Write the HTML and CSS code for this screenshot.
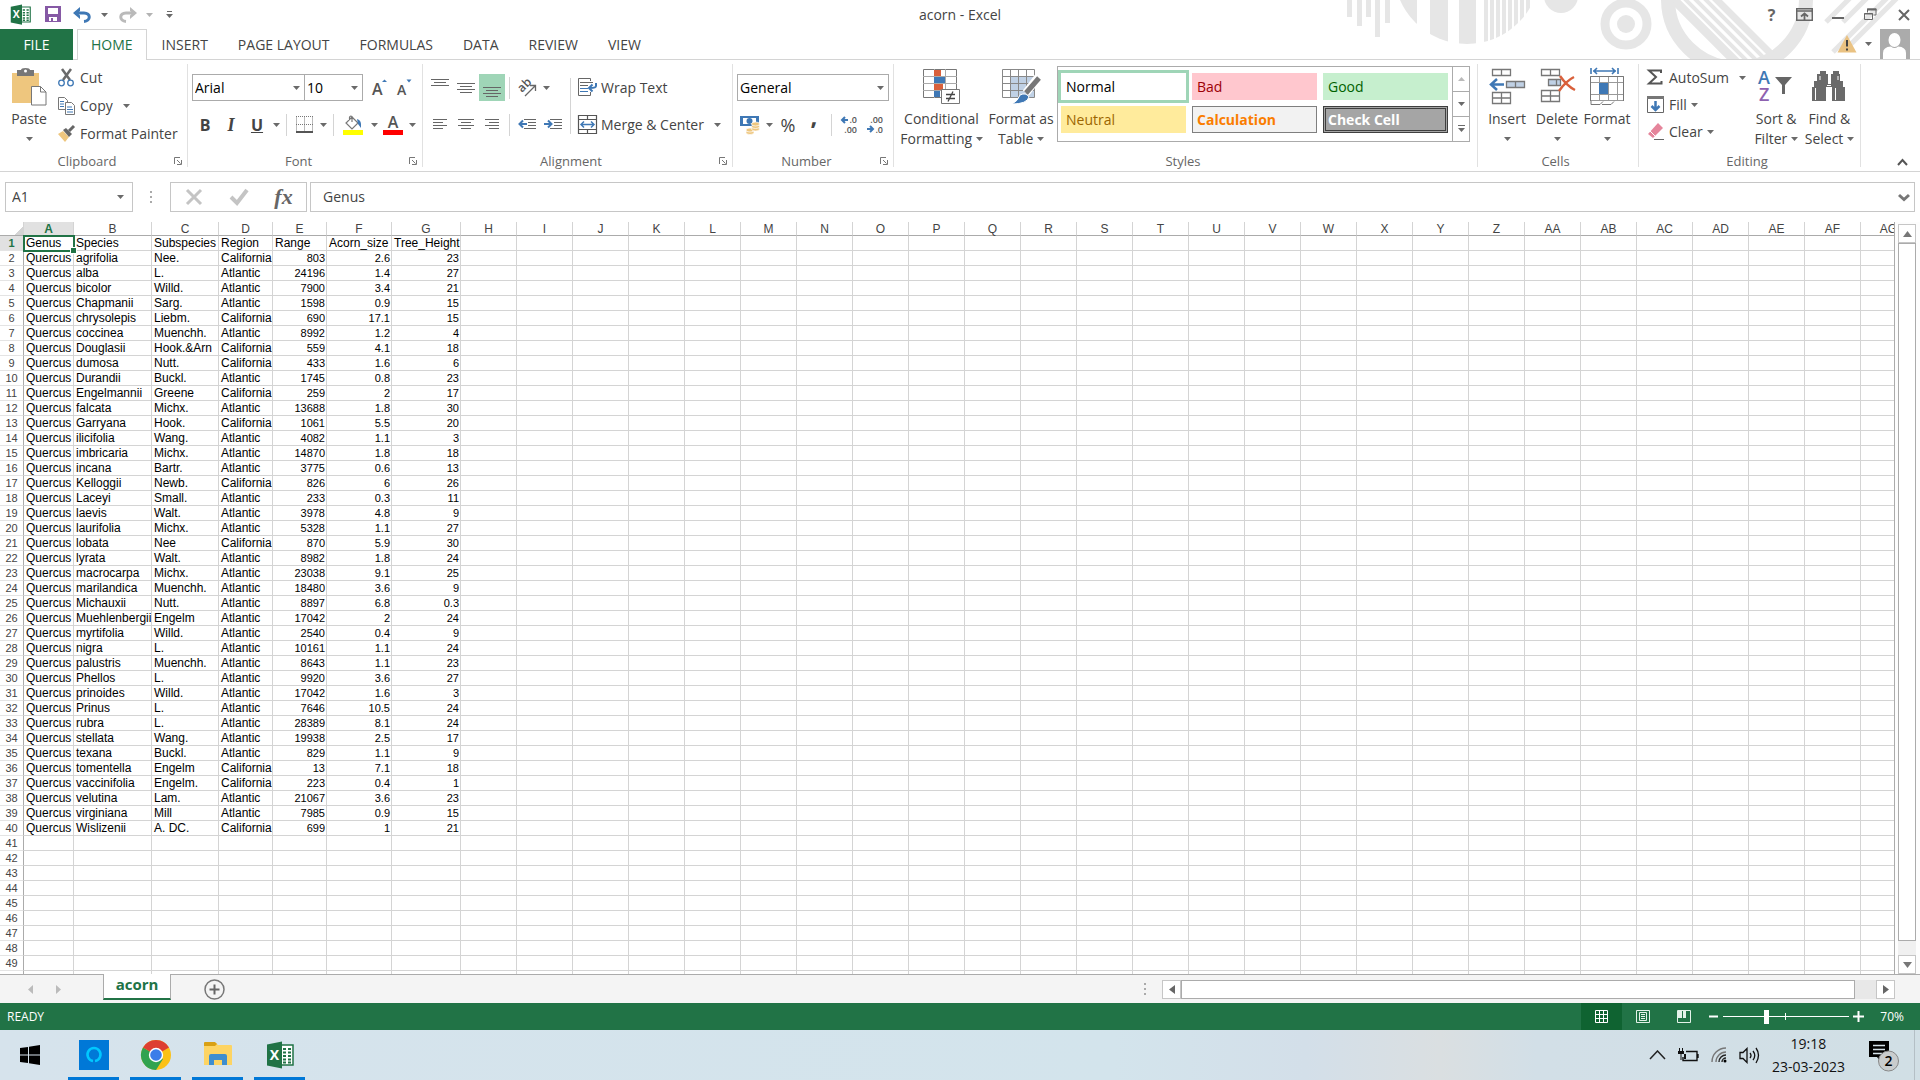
FILE: index.html
```html
<!DOCTYPE html>
<html lang="en">

<head>
    <meta charset="utf-8">
    <title>acorn - Excel</title>
    <link rel="stylesheet" href="styles.css">
</head>

<body>
    <svg class="defs">
        <symbol id="caret" viewBox="0 0 7 4"><path d="M0 0h7L3.500 4z" fill="#6a6a6a"/></symbol>
        <symbol id="launcher" viewBox="0 0 8 8"><path d="M.5 7V.5H6M3 3l3.500 3.500M7.500 3v4.500H3" fill="none" stroke="#777"/></symbol>
        <symbol id="excel" viewBox="0 0 28 28">
            <path d="M14 4h13v20H14z" fill="#fff" stroke="#217346" stroke-width="1.500"/>
            <path d="M17 8h3M22 8h3M17 11.500h3M22 11.500h3M17 15h3M22 15h3M17 18.500h3M22 18.500h3M17 21.500h3M22 21.500h3" stroke="#217346" stroke-width="2"/>
            <path d="M1 3.500L16 .5v27L1 24.500z" fill="#217346"/>
            <text x="8.500" y="19" text-anchor="middle" class="excel-x">X</text>
        </symbol>
    </svg>

    <header class="top">
        <svg class="art" width="580" height="60" viewBox="1340 0 580 60">
            <clipPath id="c1"><circle cx="1467" cy="-29" r="73"/></clipPath>
            <clipPath id="c2"><circle cx="1737" cy="-1" r="64"/></clipPath>
            <g fill="#e6e6e6">
                <path d="M1347 0h5v17h-5zM1357 0h5v26h-5zM1366 0h5v17h-5zM1375 0h5v37h-5zM1385 0h5v23h-5z"/>
                <path clip-path="url(#c1)" d="M1398 0h19v50h-19zM1430 0h18v50h-18zM1459 0h17v50h-17zM1484 0h4v50h-4zM1490 0h4v50h-4zM1496 0h4v50h-4zM1502 0h4v50h-4zM1508 0h4v50h-4zM1514 0h4v50h-4zM1520 0h4v50h-4zM1526 0h4v50h-4z"/>
                <circle cx="1561" cy="-4" r="17"/>
                <circle cx="1626" cy="24" r="9"/>
            </g>
            <g fill="none" stroke="#e6e6e6">
                <circle cx="1626" cy="24" r="21" stroke-width="9"/>
                <circle cx="1737" cy="-1" r="69" stroke-width="14"/>
                <g clip-path="url(#c2)" stroke-width="4">
                    <path stroke-width="9" d="M1668-6l70 70"/>
                    <path d="M1682-4l70 70M1692-4l70 70M1702-4l70 70"/>
                    <path stroke-width="7" d="M1713-4l70 70"/>
                </g>
                <path stroke-width="5" d="M1826 22l30-30M1843 22l30-30M1833 52l60-60M1851 44l52-52"/>
            </g>
        </svg>

        <div class="titlebar">
            <div class="qat">
                <svg class="app-icon" width="21" height="21"><use href="#excel"/></svg>
                <button class="qat-btn" aria-label="Save"><svg width="17" height="17" viewBox="0 0 17 17"><path d="M0 0h16v16H0z" fill="#8659a5"/><path d="M3 2h10v6H3zM4 11h8v4H4z" fill="#fff"/><path d="M6 12h2v4H6z" fill="#8659a5"/></svg></button>
                <button class="qat-btn" aria-label="Undo"><svg width="19" height="16" viewBox="0 0 19 16"><path d="M2 6h9c7 0 7 8 0 8.500" fill="none" stroke="#3f78b5" stroke-width="3"/><path d="M7 0L0 6l7 6V8.500L4.500 6 7 4z" fill="#3f78b5"/></svg></button>
                <button class="qat-caret" aria-label="Undo list"><svg width="7" height="4"><use href="#caret"/></svg></button>
                <button class="qat-btn faded" aria-label="Redo"><svg width="19" height="16" viewBox="0 0 19 16"><path d="M17 6H8c-7 0-7 8 0 8.500" fill="none" stroke="#777" stroke-width="3"/><path d="M12 0l7 6-7 6V8.500L14.500 6 12 4z" fill="#777"/></svg></button>
                <button class="qat-caret faded" aria-label="Redo list"><svg width="7" height="4"><use href="#caret"/></svg></button>
                <button class="qat-caret last" aria-label="Customize"><svg width="7" height="8" viewBox="0 0 7 8"><path d="M1 .5h5" stroke="#6a6a6a"/><path d="M0 3h7L3.500 7z" fill="#6a6a6a"/></svg></button>
            </div>
            <h1 class="title">acorn - Excel</h1>
            <div class="winbtns">
                <button class="winbtn help" aria-label="Help">?</button>
                <button class="winbtn" aria-label="Ribbon display options"><svg width="17" height="13" viewBox="0 0 17 13"><path d="M.75.75h15.500v11.500H.75zM1 3h15" fill="none" stroke="#666" stroke-width="1.500"/><path d="M8.500 12V6M5 8.500l3.500-3 3.500 3" fill="none" stroke="#666" stroke-width="1.800"/></svg></button>
                <button class="winbtn" aria-label="Minimize"><svg width="12" height="13"><path d="M0 9h12v2H0z" fill="#666"/></svg></button>
                <button class="winbtn" aria-label="Restore"><svg width="13" height="13" viewBox="0 0 13 13" fill="none" stroke="#666"><path d="M3.500 4.500V1h8.500v6H9.500"/><path d="M3 1.500h9.500" stroke-width="2"/><path d="M.5 5.500h8v6h-8zM0 6h9"/></svg></button>
                <button class="winbtn" aria-label="Close"><svg width="12" height="12" viewBox="0 0 12 12"><path d="M1 1l10 10M11 1L1 11" stroke="#666" stroke-width="2"/></svg></button>
            </div>
        </div>

        <nav class="tabs">
            <button class="file-tab">FILE</button>
            <button class="tab active">HOME</button>
            <button class="tab">INSERT</button>
            <button class="tab">PAGE LAYOUT</button>
            <button class="tab">FORMULAS</button>
            <button class="tab">DATA</button>
            <button class="tab">REVIEW</button>
            <button class="tab">VIEW</button>
            <div class="account">
                <svg width="20" height="18" viewBox="0 0 20 18"><path d="M10 0l9.500 17.500H.5z" fill="#eac282"/><path d="M10 5v6.500M10 13.500v2" stroke="#444" stroke-width="2"/></svg>
                <svg width="7" height="4"><use href="#caret"/></svg>
                <svg width="30" height="30" viewBox="0 0 30 30"><path d="M0 0h30v30H0z" fill="#ababab"/><ellipse cx="14.500" cy="11" rx="6" ry="7" fill="#fff"/><path d="M3 30V24q0-6 8-6.500 3.500 3 7 0 8 .5 8 6.500v6z" fill="#fff"/></svg>
            </div>
        </nav>
    </header>

    <section class="ribbon">
        <div class="group g-clip">
            <div class="body">
                <button class="big paste">
                    <span class="pic"><svg width="35" height="38" viewBox="0 0 35 38"><path d="M0 5h27v30H0z" fill="#eec67e"/><path d="M5 2h4q0-2 4.500-2T18 2h4v6H5z" fill="#777"/><circle cx="13.500" cy="3" r="1.500" fill="#fff"/><path d="M19.500 18.500h9l5.500 5.500v13H19.500zM28.500 18.500V24H34" fill="#fff" stroke="#777"/></svg></span>
                    <span>Paste</span>
                    <span><svg width="7" height="4"><use href="#caret"/></svg></span>
                </button>
                <div class="list clip-list">
                    <button class="small"><svg class="ic" width="17" height="18" viewBox="0 0 17 18"><path d="M4 0l8 11M13 0L5 11" stroke="#6a6a6a" stroke-width="2.500"/><circle cx="3.500" cy="14" r="2.800" fill="none" stroke="#3f78b5" stroke-width="1.300"/><circle cx="12.500" cy="14" r="2.800" fill="none" stroke="#3f78b5" stroke-width="1.300"/></svg>Cut</button>
                    <button class="small"><svg class="ic" width="17" height="18" viewBox="0 0 17 18"><path d="M.5.5h6l3 3v9h-9z" fill="#fff" stroke="#777"/><path d="M2 4.500h4M2 7h4M2 9.500h4" stroke="#3f78b5"/><path d="M7.500 5.500h6l3 3v9h-9z" fill="#fff" stroke="#777"/><path d="M9 10h5M9 12.500h6M9 15h6" stroke="#3f78b5"/></svg>Copy<svg class="gap" width="7" height="4"><use href="#caret"/></svg></button>
                    <button class="small"><svg class="ic" width="17" height="16" viewBox="0 0 17 16"><path d="M0 8l5-3 6 6-4 5z" fill="#eec67e"/><path d="M5 4l3-2 6 6-3 3z" fill="#666"/><path d="M11 5l5-5" stroke="#666" stroke-width="3"/></svg>Format Painter</button>
                </div>
            </div>
            <div class="foot"><span>Clipboard</span><svg width="8" height="8"><use href="#launcher"/></svg></div>
        </div>

        <div class="group g-font">
            <div class="body rows">
                <div class="row">
                    <label class="combo font-name"><select aria-label="Font"><option>Arial</option></select><svg width="7" height="4"><use href="#caret"/></svg></label>
                    <label class="combo font-size"><select aria-label="Font size"><option>10</option></select><svg width="7" height="4"><use href="#caret"/></svg></label>
                    <button class="tool" aria-label="Increase font size"><svg width="16" height="18" viewBox="0 0 16 18"><text x="0" y="16" class="glyph-a">A</text><path d="M10 3h5L12.500.5z" fill="#3f78b5"/></svg></button>
                    <button class="tool" aria-label="Decrease font size"><svg width="16" height="18" viewBox="0 0 16 18"><text x="0" y="16" class="glyph-a small-a">A</text><path d="M9.500.5h5l-2.500 3z" fill="#3f78b5"/></svg></button>
                </div>
                <div class="row">
                    <button class="tool letter bold">B</button>
                    <button class="tool letter italic">I</button>
                    <button class="tool letter under">U</button>
                    <button class="drop" aria-label="Underline styles"><svg width="7" height="4"><use href="#caret"/></svg></button>
                    <i class="sep"></i>
                    <button class="tool" aria-label="Borders"><svg width="17" height="17" viewBox="0 0 17 17"><path d="M.5.5v15M8.500.5v15M16.500.5v15M0 .5h17M0 8.500h17" stroke="#777" stroke-dasharray="1 1"/><path d="M0 16h17" stroke="#555" stroke-width="2"/></svg></button>
                    <button class="drop" aria-label="Border styles"><svg width="7" height="4"><use href="#caret"/></svg></button>
                    <i class="sep"></i>
                    <button class="tool wide" aria-label="Fill color"><svg width="20" height="20" viewBox="0 0 20 20"><path d="M9 2l6 6-6 6-6-6zM9 7V1.500q-2-1-2.500 1V5" fill="#fff" stroke="#777" stroke-width="1.200"/><path d="M14 4q5 1 4 9l-3-4z" fill="#3f78b5"/><path d="M0 15h20v5H0z" fill="#ff0"/></svg></button>
                    <button class="drop" aria-label="Fill colors"><svg width="7" height="4"><use href="#caret"/></svg></button>
                    <button class="tool" aria-label="Font color"><svg width="20" height="20" viewBox="0 0 20 20"><text x="10" y="13" text-anchor="middle" class="glyph-a">A</text><path d="M0 15h20v5H0z" fill="#f00"/></svg></button>
                    <button class="drop" aria-label="Font colors"><svg width="7" height="4"><use href="#caret"/></svg></button>
                </div>
            </div>
            <div class="foot"><span>Font</span><svg width="8" height="8"><use href="#launcher"/></svg></div>
        </div>

        <div class="group g-align">
            <div class="body">
                <div class="rows">
                    <div class="row">
                        <button class="tool" aria-label="Top align"><svg width="18" height="18"><path d="M0 .5h18M3 3.500h12M0 6.500h18" stroke="#666"/></svg></button>
                        <button class="tool" aria-label="Middle align"><svg width="18" height="18"><path d="M0 4.500h18M3 7.500h12M0 10.500h18M3 13.500h12" stroke="#666"/></svg></button>
                        <button class="tool on" aria-label="Bottom align"><svg width="18" height="18"><path d="M0 8.500h18M3 11.500h12M0 14.500h18M3 17.500h12" stroke="#666"/></svg></button>
                        <i class="sep"></i>
                        <button class="tool" aria-label="Orientation"><svg width="20" height="18" viewBox="0 0 20 18"><text x="0" y="0" transform="translate(5 14) rotate(-45)" class="ab">ab</text><path d="M8 17L18 7M13 6.500h5.500V12" fill="none" stroke="#666" stroke-width="1.300"/></svg></button>
                        <button class="drop" aria-label="Orientation list"><svg width="7" height="4"><use href="#caret"/></svg></button>
                    </div>
                    <div class="row">
                        <button class="tool" aria-label="Align left"><svg width="14" height="13"><path d="M0 1.500h14M0 4.500h10M0 7.500h14M0 10.500h10" stroke="#666"/></svg></button>
                        <button class="tool" aria-label="Center"><svg width="16" height="13"><path d="M0 1.500h16M3 4.500h10M0 7.500h16M3 10.500h10" stroke="#666"/></svg></button>
                        <button class="tool" aria-label="Align right"><svg width="14" height="13"><path d="M0 1.500h14M4 4.500h10M0 7.500h14M4 10.500h10" stroke="#666"/></svg></button>
                        <i class="sep"></i>
                        <button class="tool" aria-label="Decrease indent"><svg width="18" height="13"><path d="M6 1.500h12M10 4.500h8M10 7.500h8M6 10.500h12" stroke="#666"/><path d="M9 6H2M5 2.500L1.500 6 5 9.500" fill="none" stroke="#3f78b5" stroke-width="2"/></svg></button>
                        <button class="tool" aria-label="Increase indent"><svg width="18" height="13"><path d="M6 1.500h12M10 4.500h8M10 7.500h8M6 10.500h12" stroke="#666"/><path d="M0 6h7M4 2.500L7.500 6 4 9.500" fill="none" stroke="#3f78b5" stroke-width="2"/></svg></button>
                    </div>
                </div>
                <i class="sep tall"></i>
                <div class="rows">
                    <button class="text-btn"><svg class="ic" width="20" height="19" viewBox="0 0 20 19"><path d="M12.500 3V.5H.5v17h12V14" fill="none" stroke="#666"/><path d="M2 4.500h13M2 7.500h8" stroke="#666"/><path d="M2 10.500h8M2 13.500h8" stroke="#3f78b5"/><path d="M18 5v3q0 2-6 2M14.500 6.500L11 10l3.500 3.500" fill="none" stroke="#3f78b5" stroke-width="2"/></svg>Wrap Text</button>
                    <button class="text-btn"><svg class="ic" width="20" height="19" viewBox="0 0 20 19"><path d="M.5.5h18v18H.5zM0 4.500h19M0 14.500h19M9.500 0v4M9.500 15v4" fill="none" stroke="#555" stroke-width="1.200"/><path d="M3 9.500h13M6 6.500l-3 3 3 3M13 6.500l3 3-3 3" fill="none" stroke="#3f78b5" stroke-width="1.500"/></svg>Merge &amp; Center<svg class="gap" width="7" height="4"><use href="#caret"/></svg></button>
                </div>
            </div>
            <div class="foot"><span>Alignment</span><svg width="8" height="8"><use href="#launcher"/></svg></div>
        </div>

        <div class="group g-number">
            <div class="body rows">
                <label class="combo"><select aria-label="Number format"><option>General</option></select><svg width="7" height="4"><use href="#caret"/></svg></label>
                <div class="row">
                    <button class="tool" aria-label="Accounting format"><svg width="20" height="20" viewBox="0 0 20 20"><path d="M0 1h19v10H0z" fill="#3f78b5"/><path d="M3 3h13v6H3z" fill="#fff"/><circle cx="9.500" cy="6" r="3" fill="#3f78b5"/><g fill="#eec67e" stroke="#fff" stroke-width=".7"><ellipse cx="10" cy="17.500" rx="4" ry="2"/><ellipse cx="10" cy="15" rx="4" ry="2"/><ellipse cx="15.500" cy="14" rx="4" ry="2"/><ellipse cx="15.500" cy="11.500" rx="4" ry="2"/><ellipse cx="15.500" cy="9" rx="4" ry="2"/></g></svg></button>
                    <button class="drop" aria-label="Currencies"><svg width="7" height="4"><use href="#caret"/></svg></button>
                    <button class="tool percent">%</button>
                    <button class="tool comma" aria-label="Comma style">,</button>
                    <i class="sep"></i>
                    <button class="tool" aria-label="Increase decimal"><svg width="17" height="19" viewBox="0 0 17 19"><text x="16" y="8" text-anchor="end" class="dec">.0</text><text x="16" y="18" text-anchor="end" class="dec">.00</text><path d="M7 5H1.500M4 2L1 5l3 3" fill="none" stroke="#3f78b5" stroke-width="2"/></svg></button>
                    <button class="tool" aria-label="Decrease decimal"><svg width="17" height="19" viewBox="0 0 17 19"><text x="16" y="8" text-anchor="end" class="dec">.00</text><text x="16" y="18" text-anchor="end" class="dec">.0</text><path d="M0 14h5.500M3 11l3 3-3 3" fill="none" stroke="#3f78b5" stroke-width="2"/></svg></button>
                </div>
            </div>
            <div class="foot"><span>Number</span><svg width="8" height="8"><use href="#launcher"/></svg></div>
        </div>

        <div class="group g-styles">
            <div class="body">
                <button class="big cond">
                    <span class="pic"><svg width="38" height="36" viewBox="0 0 38 36"><path d="M.5.5h33v28H.5z" fill="#fff" stroke="#777"/><path d="M0 7.500h34M0 14.500h34M0 21.500h34M11.500 0v29M22.500 0v29" stroke="#aaa"/><path d="M11 1h7v6h-7zM11 15h9v6h-9z" fill="#d9603b"/><path d="M11 8h11v6H11zM11 22h6v6h-6z" fill="#3f78b5"/><path d="M18.500 20.500h18v14h-18z" fill="#fff" stroke="#777"/><path d="M23 25.500h9M23 29.500h9M30 22.500l-5 10" stroke="#444" stroke-width="1.300"/></svg></span>
                    <span>Conditional</span>
                    <span>Formatting <svg width="7" height="4"><use href="#caret"/></svg></span>
                </button>
                <button class="big fmt">
                    <span class="pic"><svg width="38" height="36" viewBox="0 0 38 36"><path d="M8 8h25v20H8z" fill="#c0d1e5"/><path d="M.5.5h32v28H.5zM0 7.500h33M0 14.500h33M0 21.500h33M8.500 0v29M16.500 0v29M24.500 0v29" fill="none" stroke="#888"/><path d="M37 7L24 24" stroke="#fff" stroke-width="8"/><path d="M37 9L24 24" stroke="#777" stroke-width="5"/><path d="M10 35q6-3 8-9 6-3 9 2-2 7-17 7z" fill="#3f78b5" stroke="#fff"/></svg></span>
                    <span>Format as</span>
                    <span>Table <svg width="7" height="4"><use href="#caret"/></svg></span>
                </button>
                <div class="gallery">
                    <div class="swatches">
                        <button class="sw normal">Normal</button>
                        <button class="sw bad">Bad</button>
                        <button class="sw good">Good</button>
                        <button class="sw neutral">Neutral</button>
                        <button class="sw calc">Calculation</button>
                        <button class="sw check">Check Cell</button>
                    </div>
                    <div class="scrollers">
                        <button class="faded" aria-label="Up"><svg width="7" height="4" viewBox="0 0 7 4"><path d="M0 4h7L3.500 0z" fill="#777"/></svg></button>
                        <button aria-label="Down"><svg width="7" height="4"><use href="#caret"/></svg></button>
                        <button aria-label="More"><svg width="7" height="8" viewBox="0 0 7 8"><path d="M0 .5h7" stroke="#6a6a6a"/><path d="M0 3h7L3.500 7z" fill="#6a6a6a"/></svg></button>
                    </div>
                </div>
            </div>
            <div class="foot"><span>Styles</span></div>
        </div>

        <div class="group g-cells">
            <div class="body">
                <button class="big cell">
                    <span class="pic"><svg width="37" height="36" viewBox="0 0 37 36"><path d="M3.500.5h18v6h-18zM12.500 0v7M3.500 23.500h18v11h-18zM3 29h19M12.500 23v12" fill="none" stroke="#777" stroke-width="1.300"/><path d="M17.500 12.500h18v6h-18zM26.500 12v7" fill="#c0d1e5" stroke="#777" stroke-width="1.300"/><path d="M15 15.500H3M8 10l-6 5.500L8 21" fill="none" stroke="#3f78b5" stroke-width="2.500"/></svg></span>
                    <span>Insert</span>
                    <span><svg width="7" height="4"><use href="#caret"/></svg></span>
                </button>
                <button class="big cell">
                    <span class="pic"><svg width="37" height="36" viewBox="0 0 37 36"><path d="M2.500.5h18v6h-18zM11.500 0v7M2.500 21.500h18v11h-18zM2 27h19M11.500 21v12" fill="none" stroke="#777" stroke-width="1.300"/><path d="M9.500 10.500h12v6h-12zM17.500 10v7" fill="#c0d1e5" stroke="#777" stroke-width="1.300"/><path d="M21 7q7 10 15 14M35 8q-8 4-15 14" fill="none" stroke="#d9603b" stroke-width="2.500"/></svg></span>
                    <span>Delete</span>
                    <span><svg width="7" height="4"><use href="#caret"/></svg></span>
                </button>
                <button class="big cell">
                    <span class="pic"><svg width="35" height="38" viewBox="0 0 35 38"><path d="M1 0v6M28 0v6M3 3h23M7 0L4 3l3 3M22 0l3 3-3 3" fill="none" stroke="#3f78b5" stroke-width="1.600"/><path d="M.5 8.500h33v24H.5zM0 14.500h34M0 26.500h34M9.500 8v25M18.500 8v25M27.500 8v25" fill="#fff" stroke="#999"/><path d="M.5 33V8.500h33V33" fill="none" stroke="#777"/><path d="M9 15h9v11H9z" fill="#3f78b5"/><path d="M1 33v3.500h9l3-3M12 36.500h9l3-3" fill="none" stroke="#777"/></svg></span>
                    <span>Format</span>
                    <span><svg width="7" height="4"><use href="#caret"/></svg></span>
                </button>
            </div>
            <div class="foot"><span>Cells</span></div>
        </div>

        <div class="group g-edit">
            <div class="body">
                <div class="list edit-list">
                    <button class="small"><svg class="ic" width="17" height="17" viewBox="0 0 17 17"><path d="M14 4V1.500H2L9 8l-7 6.500h12.500V12" fill="none" stroke="#555" stroke-width="2"/></svg>AutoSum<svg class="gap" width="7" height="4"><use href="#caret"/></svg></button>
                    <button class="small"><svg class="ic" width="17" height="18" viewBox="0 0 17 18"><path d="M.5.5h16v16H.5z" fill="#fff" stroke="#666"/><path d="M0 1.500h17" stroke="#777" stroke-width="3"/><path d="M8.500 5v9M4.500 10l4 4 4-4" fill="none" stroke="#3f78b5" stroke-width="2.500"/></svg>Fill<svg class="near" width="7" height="4"><use href="#caret"/></svg></button>
                    <button class="small"><svg class="ic" width="17" height="17" viewBox="0 0 17 17"><path d="M1 11L11 0l5 5L6 15z" fill="#e5859b"/><path d="M3 8l5 5" stroke="#fff"/><path d="M7 16.500h10" stroke="#666"/></svg>Clear<svg class="near" width="7" height="4"><use href="#caret"/></svg></button>
                </div>
                <button class="big find">
                    <span class="pic"><svg width="36" height="34" viewBox="0 0 36 34"><text x="0" y="14" class="az a">A</text><text x="1" y="31" class="az z">Z</text><path d="M17 7h17l-7 8v9h-3v-9z" fill="#666"/></svg></span>
                    <span>Sort &amp;</span>
                    <span>Filter <svg width="7" height="4"><use href="#caret"/></svg></span>
                </button>
                <button class="big find">
                    <span class="pic"><svg width="34" height="32" viewBox="0 0 34 32"><path d="M8 0h6v3h2v10h3V3h2V0h6v3h1v7h3v6h2v14H20V16h-6v14H0V16h2v-6h3V3h3z" fill="#6a6a6a"/><path d="M3.500 17v12M23.500 17v12M8 5v4M26 5v4M15 14.500h4" stroke="#fff"/></svg></span>
                    <span>Find &amp;</span>
                    <span>Select <svg width="7" height="4"><use href="#caret"/></svg></span>
                </button>
            </div>
            <div class="foot"><span>Editing</span></div>
        </div>

        <button class="collapse" aria-label="Collapse the ribbon"><svg width="11" height="8"><path d="M1 7l4.500-5L10 7" fill="none" stroke="#555" stroke-width="2"/></svg></button>
    </section>

    <section class="formula">
        <label class="namebox"><input type="text" value="A1" aria-label="Name box"><svg width="7" height="4"><use href="#caret"/></svg></label>
        <i class="dots"></i>
        <div class="fx-btns">
            <button aria-label="Cancel"><svg width="18" height="16"><path d="M2 1l14 14M16 1L2 15" stroke="#c4c4c4" stroke-width="3"/></svg></button>
            <button aria-label="Enter"><svg width="20" height="16"><path d="M2 8l6 6L18 1" fill="none" stroke="#c4c4c4" stroke-width="4"/></svg></button>
            <button class="fx" aria-label="Insert function">fx</button>
        </div>
        <label class="fbar"><input type="text" value="Genus" aria-label="Formula bar"><svg width="12" height="9"><path d="M1 2l5 4.500L11 2" fill="none" stroke="#777" stroke-width="3"/></svg></label>
    </section>

    <main class="sheet">
        <div class="grid-wrap">
            <table class="grid" id="grid"></table>
        </div>
        <div class="vscroll">
            <button aria-label="Scroll up"><svg width="9" height="6"><path d="M0 6h9L4.500 0z" fill="#777"/></svg></button>
            <div class="vtrack"><div class="vthumb"></div></div>
            <button aria-label="Scroll down"><svg width="9" height="6"><path d="M0 0h9L4.500 6z" fill="#777"/></svg></button>
        </div>
    </main>

    <div class="sheetbar">
        <button class="nav-arrow" aria-label="Previous sheet"><svg width="5" height="9"><path d="M5 0v9L0 4.500z" fill="#bbb"/></svg></button>
        <button class="nav-arrow" aria-label="Next sheet"><svg width="5" height="9"><path d="M0 0v9l5-4.500z" fill="#bbb"/></svg></button>
        <button class="sheet-tab">acorn</button>
        <button class="add" aria-label="New sheet"><svg width="21" height="21"><circle cx="10.500" cy="10.500" r="9.500" fill="none" stroke="#777" stroke-width="1.500"/><path d="M10.500 5.500v10M5.500 10.500h10" stroke="#666" stroke-width="2"/></svg></button>
        <i class="dots"></i>
        <div class="hscroll">
            <button aria-label="Scroll left"><svg width="6" height="9"><path d="M6 0v9L0 4.500z" fill="#666"/></svg></button>
            <div class="htrack"><div class="hthumb"></div></div>
            <button aria-label="Scroll right"><svg width="6" height="9"><path d="M0 0v9l6-4.500z" fill="#666"/></svg></button>
        </div>
    </div>

    <div class="status">
        <span class="ready">READY</span>
        <button class="view on" aria-label="Normal view"><svg width="13" height="13"><path d="M.5.5h12v12H.5zM4.500 0v13M8.500 0v13M0 4.500h13M0 8.500h13" fill="none" stroke="#fff"/></svg></button>
        <button class="view" aria-label="Page layout view"><svg width="14" height="13"><path d="M.5.5h13v12H.5zM3.500 2.500h7v8h-7zM5 4.500h4M5 6.500h4M5 8.500h4" fill="none" stroke="#e4f2e9"/></svg></button>
        <button class="view" aria-label="Page break preview"><svg width="14" height="13"><path d="M.5.5h13v12H.5z" fill="none" stroke="#e4f2e9"/><path d="M1 1h4v7H1zM6 1h3v7H6z" fill="#e4f2e9"/></svg></button>
        <button class="zoom-btn" aria-label="Zoom out"><svg width="11" height="11"><path d="M1 5.500h9" stroke="#fff" stroke-width="2"/></svg></button>
        <input class="zoom" type="range" min="0" max="100" value="34" aria-label="Zoom">
        <button class="zoom-btn" aria-label="Zoom in"><svg width="11" height="11"><path d="M0 5.500h11M5.500 0v11" stroke="#fff" stroke-width="2"/></svg></button>
        <span class="pct">70%</span>
    </div>

    <footer class="taskbar">
        <button class="start" aria-label="Start"><svg width="20" height="20"><path d="M0 3l8-1v7.500H0zM9 1.800L20 0v9.500H9zM0 10.500h8V18l-8-1zM9 10.500h11V20L9 18.200z"/></svg></button>
        <button class="task" aria-label="Alexa"><svg width="30" height="30"><path d="M0 0h30v30H0z" fill="#0078d7"/><path d="M14 21a6.500 6.500 0 1 1 2 0" fill="none" stroke="#00c8ff" stroke-width="2.500"/></svg></button>
        <button class="task" aria-label="Chrome"><svg width="30" height="30" viewBox="0 0 30 30"><circle cx="15" cy="15" r="15" fill="#fbc116"/><path d="M15 15L2 7.500a15 15 0 0 0 13 22.500l7-11z" fill="#31a350"/><path d="M15 15L2 7.500a15 15 0 0 1 26 0z" fill="#dd3f32"/><circle cx="15" cy="15" r="7.200" fill="#fff"/><circle cx="15" cy="15" r="5.800" fill="#3b7de9"/></svg></button>
        <button class="task" aria-label="File Explorer"><svg width="28" height="26" viewBox="0 0 28 26"><path d="M0 2q0-1 1-1h11l2 2h13q1 0 1 1v19H0z" fill="#fdd463"/><path d="M0 1q0-1 1-1h10l2 2-2 2H0z" fill="#d9a013"/><path d="M5 23V14q0-2 2-2h14q2 0 2 2v9h-5v-5h-8v5z" fill="#3e8ed0"/></svg></button>
        <button class="task" aria-label="Excel"><svg width="28" height="28"><use href="#excel"/></svg></button>
        <div class="tray">
            <svg width="17" height="10"><path d="M1 9l7.500-8L16 9" fill="none" stroke="#222" stroke-width="1.500"/></svg>
            <svg width="21" height="14"><path d="M8 3.500h11v9H5V9M20 6v4" fill="none" stroke="#111" stroke-width="1.400"/><path d="M1.500 0v3M4.500 0v3M3 6v6" stroke="#111"/><path d="M0 3h6v3H0zM6 6h2v5H6z" fill="#111"/></svg>
            <svg width="16" height="16"><g fill="none" stroke="#777" stroke-width="1.400"><path d="M1 15A14 14 0 0 1 15 1"/><path d="M5 15A10 10 0 0 1 15 5"/><path d="M8 15a7 7 0 0 1 7-7" stroke="#222"/><path d="M11 15a4 4 0 0 1 4-4" stroke="#222"/></g><circle cx="14" cy="14" r="1.500"/></svg>
            <svg width="21" height="17"><path d="M1 5.500h3l4-4v14l-4-4H1zM11 6q2 2.500 0 5M14 4q3.500 4.500 0 9M17 1q5 7 0 15" fill="none" stroke="#111" stroke-width="1.300"/></svg>
            <div class="clock"><span>19:18</span><span>23-03-2023</span></div>
            <button class="notes" aria-label="Notifications"><svg width="30" height="31" viewBox="0 0 30 31"><path d="M0 0h20v16h-6l-3 4-3-4H0z"/><path d="M4 4.500h12M4 8.500h12M4 12.500h9" stroke="#d5e2e9" stroke-width="1.500"/><circle cx="19.500" cy="20" r="10" fill="#c9cccd" stroke="#888"/><text x="19.500" y="25" text-anchor="middle" class="count">2</text></svg></button>
            <i class="peek"></i>
        </div>
    </footer>

    <script src="script.js"></script>
</body>

</html>
```
FILE: script.js
```js
// Column widths A..G, everything after that is the default width
var widths = [50, 78, 67, 54, 54, 65, 69];
var defaultWidth = 56;
var colCount = 33;
var rowCount = 50;

var data = [
    "Genus|Species|Subspecies|Region|Range|Acorn_size|Tree_Height",
    "Quercus|agrifolia|Nee.|California|803|2.6|23",
    "Quercus|alba|L.|Atlantic|24196|1.4|27",
    "Quercus|bicolor|Willd.|Atlantic|7900|3.4|21",
    "Quercus|Chapmanii|Sarg.|Atlantic|1598|0.9|15",
    "Quercus|chrysolepis|Liebm.|California|690|17.1|15",
    "Quercus|coccinea|Muenchh.|Atlantic|8992|1.2|4",
    "Quercus|Douglasii|Hook.&Arn|California|559|4.1|18",
    "Quercus|dumosa|Nutt.|California|433|1.6|6",
    "Quercus|Durandii|Buckl.|Atlantic|1745|0.8|23",
    "Quercus|Engelmannii|Greene|California|259|2|17",
    "Quercus|falcata|Michx.|Atlantic|13688|1.8|30",
    "Quercus|Garryana|Hook.|California|1061|5.5|20",
    "Quercus|ilicifolia|Wang.|Atlantic|4082|1.1|3",
    "Quercus|imbricaria|Michx.|Atlantic|14870|1.8|18",
    "Quercus|incana|Bartr.|Atlantic|3775|0.6|13",
    "Quercus|Kelloggii|Newb.|California|826|6|26",
    "Quercus|Laceyi|Small.|Atlantic|233|0.3|11",
    "Quercus|laevis|Walt.|Atlantic|3978|4.8|9",
    "Quercus|laurifolia|Michx.|Atlantic|5328|1.1|27",
    "Quercus|lobata|Nee|California|870|5.9|30",
    "Quercus|lyrata|Walt.|Atlantic|8982|1.8|24",
    "Quercus|macrocarpa|Michx.|Atlantic|23038|9.1|25",
    "Quercus|marilandica|Muenchh.|Atlantic|18480|3.6|9",
    "Quercus|Michauxii|Nutt.|Atlantic|8897|6.8|0.3",
    "Quercus|Muehlenbergii|Engelm|Atlantic|17042|2|24",
    "Quercus|myrtifolia|Willd.|Atlantic|2540|0.4|9",
    "Quercus|nigra|L.|Atlantic|10161|1.1|24",
    "Quercus|palustris|Muenchh.|Atlantic|8643|1.1|23",
    "Quercus|Phellos|L.|Atlantic|9920|3.6|27",
    "Quercus|prinoides|Willd.|Atlantic|17042|1.6|3",
    "Quercus|Prinus|L.|Atlantic|7646|10.5|24",
    "Quercus|rubra|L.|Atlantic|28389|8.1|24",
    "Quercus|stellata|Wang.|Atlantic|19938|2.5|17",
    "Quercus|texana|Buckl.|Atlantic|829|1.1|9",
    "Quercus|tomentella|Engelm|California|13|7.1|18",
    "Quercus|vaccinifolia|Engelm.|California|223|0.4|1",
    "Quercus|velutina|Lam.|Atlantic|21067|3.6|23",
    "Quercus|virginiana|Mill|Atlantic|7985|0.9|15",
    "Quercus|Wislizenii|A. DC.|California|699|1|21"
];

function colName(i) {
    return i < 26 ? String.fromCharCode(65 + i) : "A" + String.fromCharCode(39 + i);
}

function add(parent, tag, text, cls) {
    var el = document.createElement(tag);
    if (text) el.textContent = text;
    if (cls) el.className = cls;
    parent.appendChild(el);
    return el;
}

var grid = document.getElementById("grid");

var cols = add(grid, "colgroup");
add(cols, "col", "", "col-head");
for (var c = 0; c < colCount; c++) {
    add(cols, "col").style.width = (widths[c] || defaultWidth) + "px";
}

var headRow = add(add(grid, "thead"), "tr");
add(headRow, "th", "", "corner");
for (c = 0; c < colCount; c++) {
    add(headRow, "th", colName(c), c == 0 ? "selected" : "");
}

var body = add(grid, "tbody");
for (var r = 0; r < rowCount; r++) {
    var tr = add(body, "tr");
    var values = data[r] ? data[r].split("|") : [];
    add(tr, "th", String(r + 1), r == 0 ? "selected" : "");
    for (c = 0; c < colCount; c++) {
        var cls = r > 0 && c > 3 && values[c] ? "num" : "";
        if (r == 0 && c == 0) cls = "cursor";
        add(tr, "td", values[c], cls);
    }
}
```
FILE: styles.css
```css
* {
    box-sizing: border-box;
}

body {
    margin: 0;
    height: 100vh;
    display: flex;
    flex-direction: column;
    overflow: hidden;
    background: #fff;
    color: #444;
    font: 14px/20px "Open Sans", sans-serif;
}

button,
input,
select {
    margin: 0;
    padding: 0;
    border: 0;
    background: none;
    color: inherit;
    font: inherit;
    appearance: none;
}

button {
    display: flex;
    align-items: center;
    justify-content: center;
    white-space: nowrap;
}

svg {
    flex: none;
}

button svg {
    overflow: visible;
}

.defs {
    position: absolute;
    width: 0;
    height: 0;
}

.faded {
    opacity: 0.5;
}

.excel-x {
    font: bold 14px "Open Sans", sans-serif;
    fill: #fff;
}

/* title bar and tabs */
.top {
    position: relative;
}

.art {
    position: absolute;
    top: 0;
    right: 0;
}

.titlebar {
    position: relative;
    display: flex;
    align-items: center;
    height: 29px;
}

.qat,
.winbtns {
    flex: 1;
    display: flex;
    align-items: center;
    height: 26px;
}

.app-icon {
    margin: 0 8px 0 10px;
}

.qat-btn {
    width: 29px;
}

.qat-caret {
    width: 15px;
    margin-right: 1px;
}

.qat-caret.last {
    margin-left: 4px;
}

.title {
    margin: 0;
    font-size: 14px;
    font-weight: normal;
}

.winbtns {
    justify-content: flex-end;
}

.winbtn {
    width: 33px;
}

.help {
    font-weight: bold;
    font-size: 16px;
    color: #666;
}

.tabs {
    position: relative;
    display: flex;
    height: 31px;
    border-bottom: 1px solid #d4d4d4;
}

.file-tab {
    width: 73px;
    height: 31px;
    margin-right: 4px;
    background: #217346;
    color: #fff;
}

.tab {
    padding: 0 14px;
    height: 31px;
    border: 1px solid transparent;
    border-bottom: 0;
}

.tab.active {
    padding: 0 13px;
    background: #fff;
    border-color: #d4d4d4;
    color: #217346;
}

.account {
    margin-left: auto;
    margin-right: 10px;
    display: flex;
    align-items: center;
    gap: 8px;
}

/* ribbon */
.ribbon {
    display: flex;
    height: 112px;
    padding-top: 4px;
    border-bottom: 1px solid #d4d4d4;
}

.group {
    display: flex;
    flex-direction: column;
    height: 103px;
    border-right: 1px solid #e1e1e1;
}

.g-clip {
    width: 188px;
}

.g-font {
    width: 235px;
}

.g-align {
    width: 310px;
}

.g-number {
    width: 161px;
}

.g-styles {
    width: 584px;
}

.g-cells {
    width: 161px;
}

.g-edit {
    width: 222px;
}

.body {
    flex: 1;
    display: flex;
    align-items: flex-start;
    padding: 0 4px;
}

.foot {
    display: flex;
    align-items: center;
    height: 12px;
    padding-right: 5px;
    font-size: 13px;
    color: #666;
}

.foot span {
    flex: 1;
    text-align: center;
}

.big {
    flex-direction: column;
    justify-content: flex-start;
}

.big span {
    display: block;
    height: 20px;
}

.big svg {
    vertical-align: 3px;
}

.big .pic {
    display: flex;
    align-items: center;
    height: 45px;
}

.paste {
    width: 50px;
}

.cond {
    width: 87px;
}

.fmt {
    width: 72px;
}

.cell {
    width: 50px;
}

.find {
    width: 54px;
}

.small {
    height: 28px;
}

.edit-list .small {
    height: 27px;
}

.edit-list {
    width: 108px;
    padding-left: 4px;
}

.clip-list {
    padding-left: 4px;
}

.ic {
    margin-right: 5px;
}

.gap {
    margin-left: 10px;
}

.near {
    margin-left: 4px;
}

.rows {
    display: flex;
    flex-direction: column;
    align-items: stretch;
    gap: 10px;
    padding-top: 10px;
}

.row {
    display: flex;
    align-items: center;
    height: 27px;
}

.combo {
    display: flex;
    align-items: center;
    height: 27px;
    padding: 0 4px 0 2px;
    border: 1px solid #ababab;
    background: #fff;
    color: #000;
}

.combo select {
    flex: 1;
    min-width: 0;
}

.font-name {
    width: 115px;
}

.font-size {
    width: 60px;
    margin: 0 4px 0 -1px;
}

.tool {
    width: 26px;
    height: 27px;
}

.tool.wide {
    width: 30px;
}

.tool.on {
    background: #9fd5b7;
}

.drop {
    width: 12px;
    height: 27px;
}

.sep {
    width: 1px;
    height: 22px;
    margin: 0 4px;
    background: #d4d4d4;
}

.sep.tall {
    height: 56px;
    margin-top: 14px;
}

.letter {
    font-size: 16px;
    font-weight: bold;
}

.italic {
    font-family: "Liberation Serif", serif;
    font-style: italic;
    font-size: 18px;
}

.under {
    text-decoration: underline;
}

.percent {
    font-size: 18px;
}

.comma {
    align-items: flex-start;
    font-size: 24px;
    line-height: 10px;
    font-weight: bold;
}

.glyph-a {
    font: 600 16px "Open Sans", sans-serif;
    fill: #555;
}

.small-a {
    font-size: 14px;
}

.ab {
    font: 600 12px "Open Sans", sans-serif;
    fill: #555;
}

.dec {
    font: 600 9px "Open Sans", sans-serif;
    fill: #555;
}

.az {
    font: 600 18px "Open Sans", sans-serif;
}

.az.a {
    fill: #3f78b5;
}

.az.z {
    fill: #8e62b0;
}

.text-btn {
    justify-content: flex-start;
    height: 27px;
    padding-left: 3px;
}

.text-btn .ic {
    margin-right: 3px;
}

.gallery {
    flex: 1;
    display: flex;
    height: 76px;
    margin: 2px 3px 0 0;
    border: 1px solid #ababab;
}

.swatches {
    flex: 1;
    display: grid;
    grid-template-columns: repeat(3, 1fr);
    grid-auto-rows: 27px;
    gap: 6px;
    padding: 6px 4px 0 3px;
}

.sw {
    justify-content: flex-start;
    padding-left: 5px;
}

.normal {
    box-shadow: 0 0 0 3px #9fd5b7;
    color: #000;
}

.bad {
    background: #ffc7ce;
    color: #9c0006;
}

.good {
    background: #c6efce;
    color: #006100;
}

.neutral {
    background: #ffeb9c;
    color: #9c6500;
}

.calc {
    padding-left: 4px;
    background: #f2f2f2;
    border: 1px solid #7f7f7f;
    color: #fa7d00;
    font-weight: bold;
}

.check {
    padding-left: 2px;
    background: #a5a5a5;
    border: 3px double #3f3f3f;
    color: #fff;
    font-weight: bold;
}

.scrollers {
    display: flex;
    flex-direction: column;
    width: 17px;
    border-left: 1px solid #ababab;
}

.scrollers button {
    flex: 1;
}

.scrollers button + button {
    border-top: 1px solid #ababab;
}

.collapse {
    align-self: flex-end;
    margin: 0 12px 5px auto;
}

/* formula bar */
.formula {
    display: flex;
    align-items: center;
    height: 50px;
    padding: 0 5px;
}

.namebox,
.fbar,
.fx-btns {
    display: flex;
    align-items: center;
    height: 30px;
    border: 1px solid #c6c6c6;
}

.namebox {
    width: 128px;
    padding: 0 8px 0 6px;
}

.namebox input,
.fbar input {
    flex: 1;
    min-width: 0;
}

.dots {
    width: 2px;
    height: 12px;
    background: repeating-linear-gradient(#aaa 0 2px, transparent 2px 5px);
}

.formula .dots {
    margin: 0 18px 0 17px;
}

.fx-btns {
    width: 137px;
    margin-right: 3px;
}

.fx-btns button {
    flex: 1;
}

.fx-btns .fx {
    font: italic bold 22px "Liberation Serif", serif;
    color: #666;
}

.fbar {
    flex: 1;
    padding: 0 4px 0 12px;
}

/* sheet */
.sheet {
    flex: 1;
    min-height: 0;
    display: flex;
}

.grid-wrap {
    flex: 1;
    min-width: 0;
    overflow: hidden;
    border-right: 1px solid #ababab;
}

.grid {
    table-layout: fixed;
    width: 100%;
    border-spacing: 0;
    font: 12px/14px "Liberation Sans", sans-serif;
    color: #000;
}

.col-head {
    width: 24px;
}

.grid th {
    padding: 0;
    font-weight: normal;
    color: #444;
}

.grid thead th {
    height: 14px;
    padding-top: 1px;
    line-height: 12px;
    border-right: 1px solid #d4d4d4;
    border-bottom: 1px solid #ababab;
}

.grid .corner {
    background: linear-gradient(135deg, #fff 75%, #d4d4d4 75%);
}

.grid tbody th {
    height: 15px;
    font-size: 11px;
    border-right: 1px solid #ababab;
    border-bottom: 1px solid #e4e4e4;
}

.grid th.selected {
    background: #e1e1e1;
    color: #217346;
    font-weight: bold;
}

.grid td {
    padding: 0 0 0 2px;
    overflow: hidden;
    white-space: nowrap;
    border-right: 1px solid #d4d4d4;
    border-bottom: 1px solid #d4d4d4;
}

.grid .num {
    padding-right: 1px;
    font-size: 11px;
    text-align: right;
}

.grid .cursor {
    position: relative;
    overflow: visible;
    outline: 2px solid #217346;
    outline-offset: -1px;
}

.cursor::after {
    content: "";
    position: absolute;
    right: -3px;
    bottom: -3px;
    width: 5px;
    height: 5px;
    background: #217346;
    outline: 1px solid #fff;
}

.vscroll {
    width: 25px;
    padding: 2px 4px 0 3px;
    display: flex;
    flex-direction: column;
    background: #fdfdfd;
}

.vscroll button,
.hscroll button {
    width: 19px;
    height: 19px;
    background: #fff;
    border: 1px solid #c6c6c6;
}

.vscroll button {
    width: 18px;
}

.vtrack {
    flex: 1;
    background: #f0f0f0;
}

.vthumb {
    height: 98%;
    background: #fff;
    border: 1px solid #ababab;
}

.sheetbar {
    display: flex;
    align-items: center;
    height: 29px;
    padding: 0 25px 0 16px;
    background: #f4f4f4;
    border-top: 1px solid #ababab;
}

.nav-arrow {
    width: 28px;
}

.sheet-tab {
    align-self: flex-start;
    width: 68px;
    height: 26px;
    margin: -1px 33px 0 31px;
    padding-bottom: 4px;
    background: #fff;
    border: solid #ababab;
    border-width: 0 1px 2px;
    border-bottom-color: #217346;
    font-weight: bold;
    font-size: 15px;
    color: #217346;
}

.sheetbar .dots {
    margin-left: auto;
    margin-right: 16px;
}

.hscroll {
    width: 39%;
    display: flex;
}

.htrack {
    flex: 1;
    background: #e8e8e8;
}

.hthumb {
    width: 97%;
    height: 19px;
    background: #fff;
    border: 1px solid #ababab;
}

/* status bar */
.status {
    display: flex;
    align-items: center;
    height: 27px;
    padding: 0 16px 0 7px;
    background: #217346;
    color: #fff;
    font-size: 12px;
}

.ready {
    margin-right: auto;
}

.view {
    width: 41px;
    height: 27px;
}

.view.on {
    background: #0f6331;
}

.zoom-btn {
    margin: 0 4px;
}

.zoom {
    width: 126px;
    height: 18px;
    background: linear-gradient(#fff, #fff) 62px 5px / 1px 7px no-repeat, linear-gradient(#fff, #fff) 0 8px / 100% 1px no-repeat;
}

.zoom::-webkit-slider-thumb {
    appearance: none;
    width: 5px;
    height: 14px;
    background: #fff;
}

.pct {
    width: 36px;
    text-align: right;
}

/* taskbar */
.taskbar {
    display: flex;
    height: 50px;
    background: linear-gradient(90deg, #d6e3ec, #d3e4ec 58%, #d3dfe9 68%, #dadfe1 75%, #d2dfe7 80%, #d1dfe5);
    color: #111;
}

.start {
    width: 60px;
    margin-right: 8px;
}

.task {
    width: 51px;
    margin-right: 11px;
    border-bottom: 3px solid #0078d7;
    padding-top: 3px;
}

.tray {
    margin-left: auto;
    display: flex;
    align-items: center;
    gap: 12px;
}

.clock {
    display: flex;
    flex-direction: column;
    text-align: center;
    line-height: 23px;
}

.notes {
    margin: 3px 3px 0 12px;
}

.count {
    font: 600 14px "Open Sans", sans-serif;
}

.peek {
    width: 6px;
    height: 50px;
    border-left: 1px solid #b4bfc5;
}
```
